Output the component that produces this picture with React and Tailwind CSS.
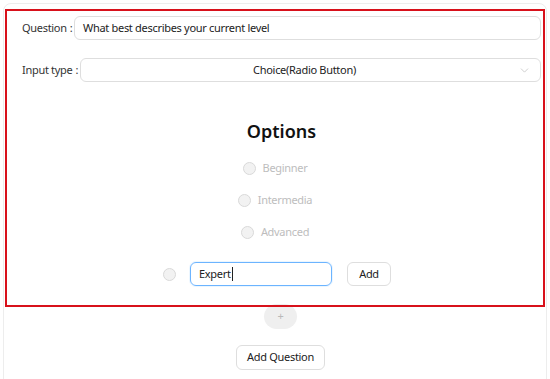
import { ChevronDown } from "lucide-react";

const options = ["Beginner", "Intermedia", "Advanced"];

function Radio({ label }) {
  return (
    <div className="flex h-[32px] items-center justify-center">
      <span className="h-[13px] w-[13px] rounded-full border border-[#d9d9d9] bg-[#f2f2f2]" />
      <span className="ml-[7px] text-[#bdbdbd]">{label}</span>
    </div>
  );
}

function Label({ text, width }) {
  return (
    <span className={`flex shrink-0 whitespace-nowrap text-[#333] ${width}`}>
      {text}
      <span className="ml-[3px]">:</span>
    </span>
  );
}

export default function App() {
  return (
    <div className="h-[379px] overflow-hidden bg-white px-[3px] pt-[3px] font-['Noto_Sans',sans-serif] text-[11px] tracking-[-0.3px] text-[#222]">
      <div className="h-[400px] rounded-lg border border-[#ededed] px-[1px] pt-[5px]">
        {/* form card */}
        <div className="relative z-10 border-2 border-[#d8111b] pb-[19px] pl-[15px] pr-[2px] pt-[5px]">
          <div className="flex items-center">
            <Label text="Question" width="w-[52px]" />
            <div className="flex h-[24px] flex-1 items-center rounded-md border border-[#dedede] px-[8px]">
              What best describes your current level
            </div>
          </div>

          <div className="mt-[18px] flex items-center">
            <Label text="Input type" width="w-[58px]" />
            <div className="relative flex h-[24px] flex-1 items-center justify-center rounded-md border border-[#dedede] pr-[12px]">
              Choice(Radio Button)
              <ChevronDown className="absolute right-[9px] h-[13px] w-[13px] text-[#c4c4c4]" strokeWidth={1.5} />
            </div>
          </div>

          <h2 className="mt-[36px] text-center text-[18px] font-semibold leading-[26px] tracking-normal text-[#111]">Options</h2>

          <div className="mt-[8px] pr-[13px]">
            {options.map((o) => (
              <Radio key={o} label={o} />
            ))}
          </div>

          <div className="mt-[14px] flex items-center justify-center pr-[9px]">
            <span className="h-[13px] w-[13px] rounded-full border border-[#d9d9d9] bg-[#f2f2f2]" />
            <div className="ml-[14px] flex h-[24px] w-[142px] items-center rounded-md border border-[#6cb4ff] px-[8px] shadow-[0_0_0_1px_rgba(5,145,255,0.08)]">
              Expert<span className="ml-[1px] h-[14px] w-px bg-[#222]" />
            </div>
            <button className="ml-[15px] h-[24px] w-[44px] rounded-md border border-[#dedede]">Add</button>
          </div>
        </div>

        <div className="-mt-[3px] flex justify-center pl-[11px]">
          <div className="flex h-[25px] w-[33px] items-center justify-center rounded-full bg-[#efefef] text-[#b9b9b9]">+</div>
        </div>

        <div className="mt-[16px] flex justify-center pl-[11px]">
          <button className="h-[25px] w-[89px] rounded-md border border-[#dedede]">Add Question</button>
        </div>
      </div>
    </div>
  );
}
